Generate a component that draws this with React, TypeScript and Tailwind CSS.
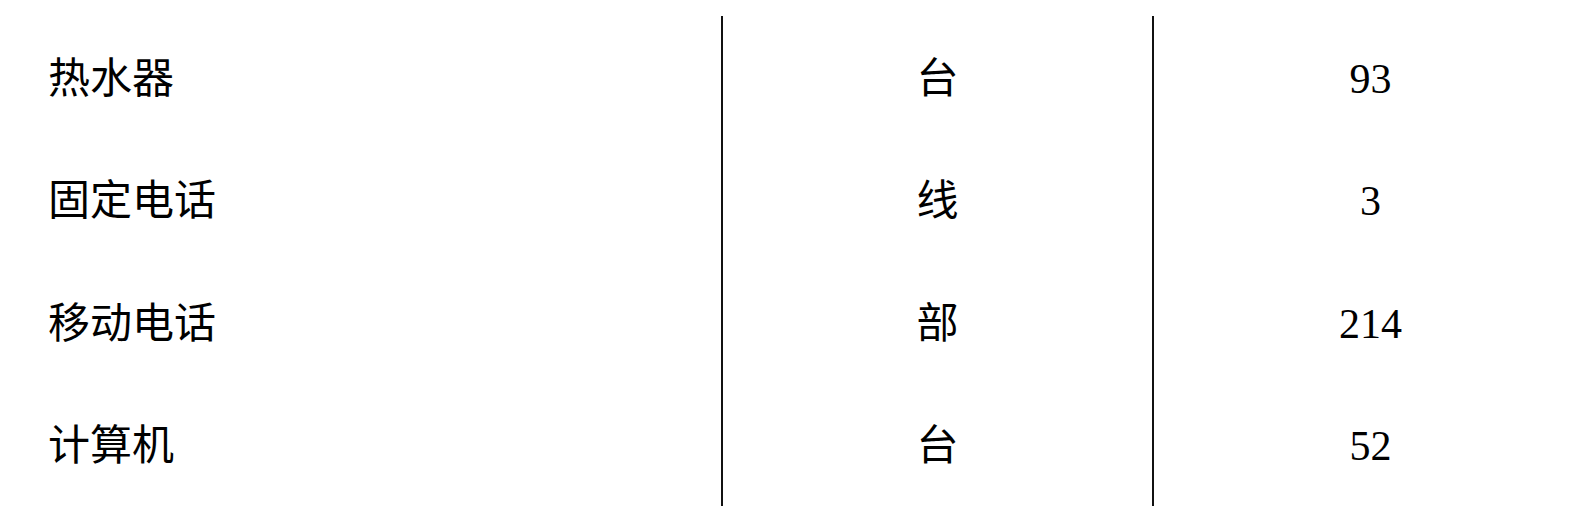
const rows = [
  { name: "热水器", unit: "台", count: "93" },
  { name: "固定电话", unit: "线", count: "3" },
  { name: "移动电话", unit: "部", count: "214" },
  { name: "计算机", unit: "台", count: "52" },
];

export default function App() {
  return (
    <div
      className="w-[1595px] h-[506px] overflow-hidden bg-white pt-[16px] text-black text-[42px] leading-none"
      style={{ fontFamily: '"Liberation Serif", "Noto Sans CJK SC", serif' }}
    >
      <div className="grid grid-cols-[721px_431px_1fr]">
        {rows.map((r, i) => (
          <div key={i} className="contents">
            <div className="h-[122.5px] flex items-center pl-[48px] pt-[3px]">{r.name}</div>
            <div className="h-[122.5px] flex items-center justify-center border-l-2 border-[#111] pt-[3px]">
              {r.unit}
            </div>
            <div className="h-[122.5px] flex items-center justify-center border-l-2 border-[#111] pr-[8px] pt-[3px]">
              {r.count}
            </div>
          </div>
        ))}
      </div>
    </div>
  );
}
